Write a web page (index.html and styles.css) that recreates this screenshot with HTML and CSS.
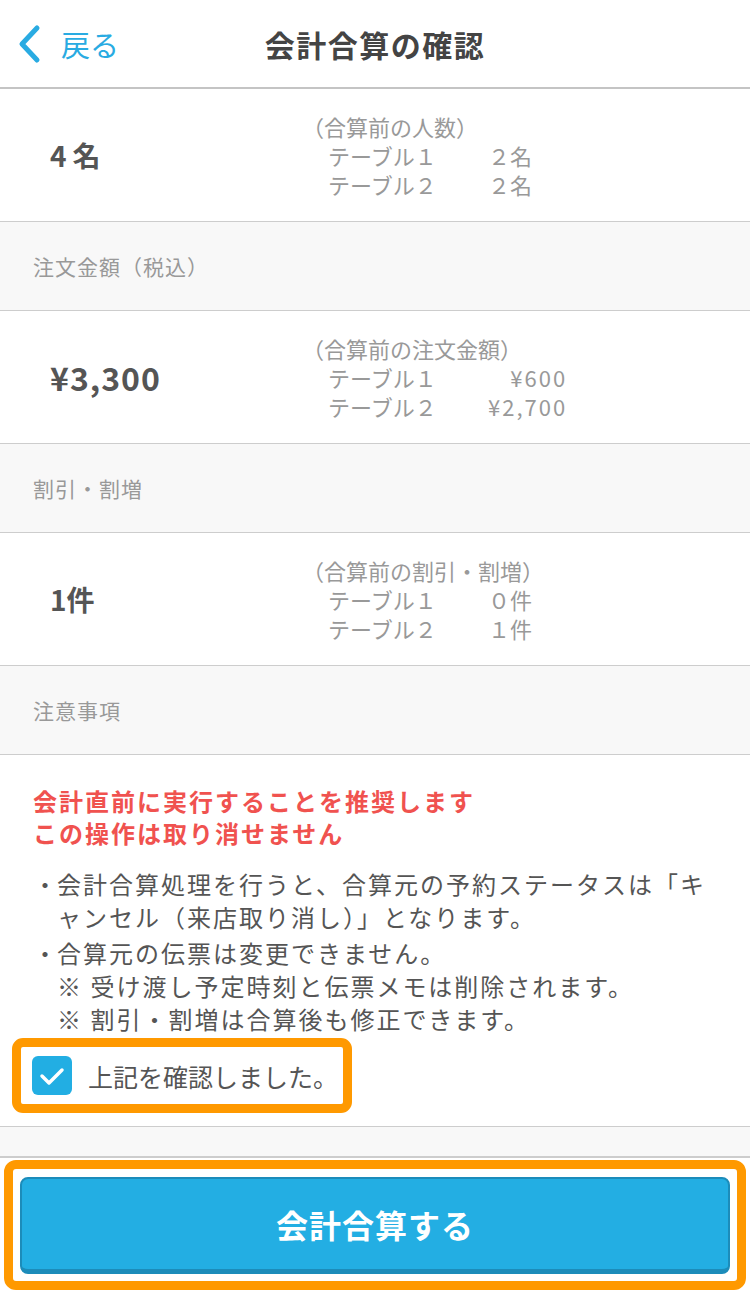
FILE: index.html
```html
<!DOCTYPE html>
<html>
<head>
    <meta charset="utf-8">
    <title>会計合算の確認</title>
    <link rel="stylesheet" href="styles.css">
</head>
<body>
    <div class="header">
        <a class="back-link">
            <svg class="back-icon" width="26" height="40" viewBox="0 0 26 40">
                <polyline points="21,4 6,20 21,36" fill="none" stroke="#29abe2" stroke-width="5" stroke-linecap="round" stroke-linejoin="round"/>
            </svg>
            <span>戻る</span>
        </a>
        <div class="title">会計合算の確認</div>
        <div></div>
    </div>

    <div class="summary-row">
        <div class="summary-main">4<span class="unit">名</span></div>
        <div class="breakdown">
            <div class="breakdown-title">（合算前の人数）</div>
            <div class="breakdown-grid">
                <span>テーブル１</span><span class="num">２名</span>
                <span>テーブル２</span><span class="num">２名</span>
            </div>
        </div>
    </div>

    <div class="section-label">注文金額（税込）</div>

    <div class="summary-row">
        <div class="summary-main price">¥3,300</div>
        <div class="breakdown">
            <div class="breakdown-title">（合算前の注文金額）</div>
            <div class="breakdown-grid">
                <span>テーブル１</span><span class="num yen">¥600</span>
                <span>テーブル２</span><span class="num yen">¥2,700</span>
            </div>
        </div>
    </div>

    <div class="section-label">割引・割増</div>

    <div class="summary-row">
        <div class="summary-main">1件</div>
        <div class="breakdown">
            <div class="breakdown-title">（合算前の割引・割増）</div>
            <div class="breakdown-grid">
                <span>テーブル１</span><span class="num">０件</span>
                <span>テーブル２</span><span class="num">１件</span>
            </div>
        </div>
    </div>

    <div class="section-label">注意事項</div>

    <div class="notice">
        <div class="warning">
            会計直前に実行することを推奨します<br>
            この操作は取り消せません
        </div>
        <ul class="notes">
            <li>会計合算処理を行うと、合算元の予約ステータスは「キ<br>ャンセル（来店取り消し）」となります。</li>
            <li>合算元の伝票は変更できません。<br>※ 受け渡し予定時刻と伝票メモは削除されます。<br>※ 割引・割増は合算後も修正できます。</li>
        </ul>
        <label class="confirm-box">
            <span class="checkbox">
                <svg width="26" height="20" viewBox="0 0 26 20">
                    <polyline points="3,10 10,17 23,4" fill="none" stroke="#fff" stroke-width="3.5" stroke-linecap="round" stroke-linejoin="round"/>
                </svg>
            </span>
            <span class="confirm-text">上記を確認しました。</span>
        </label>
    </div>

    <div class="spacer"></div>

    <div class="footer">
        <div class="action-frame">
            <button class="merge-btn">会計合算する</button>
        </div>
    </div>
</body>
</html>
```

FILE: styles.css
```css
body {
    width: 750px;
    margin: 0;
    font-family: "Noto Sans CJK JP", "Noto Sans", sans-serif;
    background: #ffffff;
    color: #555;
}
.header {
    height: 87px;
    display: grid;
    grid-template-columns: 1fr auto 1fr;
    align-items: center;
    border-bottom: 2px solid #c4c4c4;
    background: #fff;
}
.back-link {
    display: flex;
    align-items: center;
    gap: 19px;
    padding-left: 16px;
    color: #29abe2;
    font-size: 29px;
}
.back-icon {
    display: block;
}
.title {
    font-size: 30px;
    font-weight: bold;
    color: #444;
    letter-spacing: 1.5px;
}
.summary-row {
    height: 132px;
    display: flex;
    align-items: center;
    border-bottom: 1px solid #cdcdcd;
}
.summary-main {
    width: 256px;
    padding-left: 50px;
    box-sizing: border-box;
    font-size: 28px;
    font-weight: bold;
    color: #555;
}
.summary-main .unit {
    margin-left: 6px;
}
.summary-main.price {
    font-size: 32px;
    letter-spacing: 1px;
}
.breakdown {
    font-size: 22px;
    line-height: 29px;
    color: #999;
    padding-left: 46px;
}
.breakdown-grid {
    display: grid;
    grid-template-columns: 160px auto;
    padding-left: 26px;
    justify-content: start;
}
.breakdown-grid .num {
    text-align: right;
}
.breakdown-grid .yen {
    letter-spacing: 2px;
}
.section-label {
    height: 88px;
    display: flex;
    align-items: center;
    padding-left: 33px;
    font-size: 21px;
    letter-spacing: 1px;
    color: #999;
    background: #f8f8f8;
    border-bottom: 1px solid #cdcdcd;
}
.notice {
    padding: 30px 16px 13px 12px;
    border-bottom: 1px solid #cdcdcd;
}
.warning {
    padding-left: 21px;
    font-size: 24px;
    line-height: 32px;
    font-weight: bold;
    color: #f0524f;
    letter-spacing: 2px;
}
.notes {
    list-style: none;
    margin: 18px 0 0 0;
    padding: 0 0 0 45px;
    font-size: 24px;
    line-height: 33px;
    letter-spacing: 2px;
    color: #555;
}
.notes li {
    position: relative;
    margin-bottom: 3px;
}
.notes li::before {
    content: "・";
    position: absolute;
    left: -24px;
}
.confirm-box {
    display: inline-flex;
    align-items: center;
    gap: 16px;
    height: 57px;
    padding: 0 5px 0 11px;
    border: 9px solid #ff9900;
    border-radius: 11px;
    white-space: nowrap;
}
.checkbox {
    width: 40px;
    height: 39px;
    border-radius: 6px;
    background: #22aee3;
    display: flex;
    align-items: center;
    justify-content: center;
}
.confirm-text {
    font-size: 25px;
    color: #555;
}
.spacer {
    height: 29px;
    background: #f8f8f8;
    border-bottom: 2px solid #cdcdcd;
}
.footer {
    padding: 2px 4px 4px;
}
.action-frame {
    border: 9px solid #ff9900;
    border-radius: 12px;
    padding: 8px 7px 7px;
}
.merge-btn {
    display: block;
    width: 100%;
    height: 97px;
    border: 2px solid #1c8cba;
    border-bottom-width: 5px;
    border-radius: 8px;
    background: #23aee3;
    color: #fff;
    font-family: "Noto Sans CJK JP", sans-serif;
    font-size: 32px;
    font-weight: bold;
    letter-spacing: 1px;
}
```
